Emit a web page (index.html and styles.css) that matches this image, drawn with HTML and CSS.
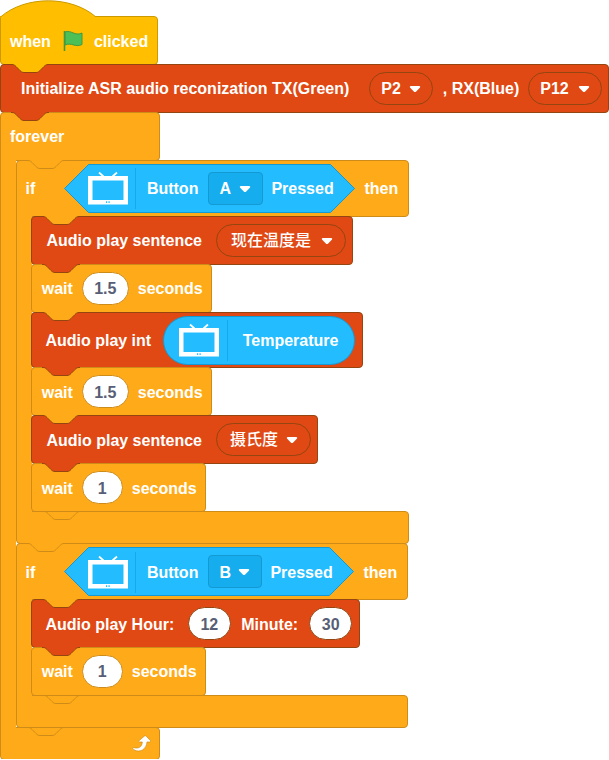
FILE: index.html
```
<!DOCTYPE html>
<html lang="en">
<head>
<meta charset="utf-8">
<title>Block script</title>
<link rel="stylesheet" href="styles.css">
</head>
<body>
<svg class="defs" aria-hidden="true">
  <symbol id="notch" viewBox="0 0 38 10"><path d="M0 0V.5H1C3 .5 4 1.5 5 2.5L9 6.500C10 7.500 11 8.500 13 8.500H25C27 8.500 28 7.500 29 6.500L33 2.500C34 1.500 35 .5 37 .5H38V0" /></symbol>
  <symbol id="tv" viewBox="0 0 42 34"><path d="M12 1.500L16.500 5.500M30 1.500L25.500 5.500" fill="none" stroke="#fff" stroke-width="1.700"/><path fill="#fff" fill-rule="evenodd" d="M1 5H41V33.500H1ZM5.500 9.500V29H36.500V9.500Z"/><path d="M19 31.200h1.200M21.500 31.200h1.200" stroke="#23bcff" stroke-width="1.700"/></symbol>
  <symbol id="arrow" viewBox="0 0 12 8"><path d="M2 1H10Q12 1.200 10.800 2.800L7.200 6.500Q6 7.500 4.800 6.500L1.200 2.800Q0 1.200 2 1Z" fill="#fff"/></symbol>
</svg>
<main class="script">
  <div class="block hat">
    <svg class="dome" viewBox="0 0 98 18"><path d="M.5 17C25.500-4.600 71-4.600 96 17V18H.5Z" fill="#ffbf00"/><path d="M.5 17C25.500-4.600 71-4.600 96 17" fill="none" stroke="#cc9900"/></svg>
    <span>when</span>
    <svg class="flag" viewBox="0 0 20 22"><path d="M2 2C8-.5 12 6.500 19 3V14.500C12 18 9 12 2 15Z" fill="#4cbf56" stroke="#45993d"/><path d="M1.500 1V21" stroke="#45993d" stroke-width="1.600"/></svg>
    <span>clicked</span>
  </div>

  <div class="block red init">
    <svg class="notch from-yellow"><use href="#notch"/></svg>
    <span>Initialize ASR audio reconization TX(Green)</span>
    <div class="menu port"><span>P2</span><svg class="arrow"><use href="#arrow"/></svg></div>
    <span>, RX(Blue)</span>
    <div class="menu port wide"><span>P12</span><svg class="arrow"><use href="#arrow"/></svg></div>
  </div>

  <div class="loop">
    <div class="block head forever">
      <svg class="notch from-red"><use href="#notch"/></svg>
      <span>forever</span>
    </div>
    <div class="body">
      <div class="loop">
        <div class="block tall head branch-a">
          <svg class="notch"><use href="#notch"/></svg>
          <span class="if">if</span>
          <div class="bool">
            <svg class="hex" viewBox="0 0 291 49"><path d="M24.500 .5H266.500L290.500 24.500L266.500 48.500H24.500L.5 24.500Z"/></svg>
            <svg class="tv"><use href="#tv"/></svg><i class="divider"></i>
            <span>Button</span>
            <div class="select"><span>A</span><svg class="arrow"><use href="#arrow"/></svg></div>
            <span>Pressed</span>
          </div>
          <span>then</span>
        </div>
        <div class="body">
          <div class="block red sentence">
            <svg class="notch on-red"><use href="#notch"/></svg>
            <span>Audio play sentence</span>
            <div class="menu phrase"><span>现在温度是</span><svg class="arrow"><use href="#arrow"/></svg></div>
          </div>
          <div class="block wait">
            <svg class="notch from-red"><use href="#notch"/></svg>
            <span>wait</span><div class="input">1.5</div><span>seconds</span>
          </div>
          <div class="block red tall play-int">
            <svg class="notch on-red"><use href="#notch"/></svg>
            <span>Audio play int</span>
            <div class="reporter"><svg class="tv"><use href="#tv"/></svg><i class="divider"></i><span>Temperature</span></div>
          </div>
          <div class="block wait">
            <svg class="notch from-red"><use href="#notch"/></svg>
            <span>wait</span><div class="input">1.5</div><span>seconds</span>
          </div>
          <div class="block red sentence unit">
            <svg class="notch on-red"><use href="#notch"/></svg>
            <span>Audio play sentence</span>
            <div class="menu phrase"><span>摄氏度</span><svg class="arrow"><use href="#arrow"/></svg></div>
          </div>
          <div class="block wait short">
            <svg class="notch from-red"><use href="#notch"/></svg>
            <span>wait</span><div class="input">1</div><span>seconds</span>
          </div>
        </div>
        <div class="block foot branch-a"><svg class="notch inner"><use href="#notch"/></svg></div>
      </div>

      <div class="loop">
        <div class="block tall head branch-b">
          <svg class="notch"><use href="#notch"/></svg>
          <span class="if">if</span>
          <div class="bool">
            <svg class="hex" viewBox="0 0 290 49"><path d="M24.500 .5H265.500L289.500 24.500L265.500 48.500H24.500L.5 24.500Z"/></svg>
            <svg class="tv"><use href="#tv"/></svg><i class="divider"></i>
            <span>Button</span>
            <div class="select"><span>B</span><svg class="arrow"><use href="#arrow"/></svg></div>
            <span>Pressed</span>
          </div>
          <span>then</span>
        </div>
        <div class="body">
          <div class="block red time">
            <svg class="notch on-red"><use href="#notch"/></svg>
            <span>Audio play Hour:</span><div class="input">12</div><span>Minute:</span><div class="input">30</div>
          </div>
          <div class="block wait short">
            <svg class="notch from-red"><use href="#notch"/></svg>
            <span>wait</span><div class="input">1</div><span>seconds</span>
          </div>
        </div>
        <div class="block foot branch-b"><svg class="notch inner"><use href="#notch"/></svg></div>
      </div>
    </div>
    <div class="block foot forever end">
      <svg class="notch inner"><use href="#notch"/></svg>
      <svg class="repeat" viewBox="0 0 20 18"><path d="M1.500 12.500C7 14.200 10 11.500 10.300 7H7.500Q6.300 6.500 7.200 5.500L12.500 1Q13.500 .3 14.300 1.200L18.500 5.700Q19 6.800 17.800 7H15C14.500 14 8.500 18.200 2 14.900Q0 13.500 1.500 12.500Z" fill="#fff" stroke="#cf8b17" stroke-width=".7"/></svg>
    </div>
  </div>
</main>
</body>
</html>
```
FILE: styles.css
```
* { box-sizing: border-box; }
body {
  margin: 0;
  background: #fff;
  color: #fff;
  font: bold 16px/20px "Liberation Sans", "Noto Sans CJK SC", sans-serif;
  overflow: hidden;
}
.defs { position: absolute; width: 0; height: 0; }
.script { padding-top: 16px; width: 609px; }
svg { display: block; flex: none; }
span { white-space: nowrap; padding-top: 1px; }

.block {
  position: relative;
  display: flex;
  align-items: center;
  height: 48.930px;
  margin-bottom: -1px;
  padding: 1px 0 0 9px;
  background: #ffab19;
  border: 1px solid #cf8b17;
  border-radius: 4px;
}
.block > * { flex: none; }
.tall { height: 56.900px; }
.red { background: #e04814; border-color: #944510; }

.hat { width: 158px; height: 49px; background: #ffbf00; border-color: #cc9900; border-top-left-radius: 0; }
.dome { position: absolute; left: -1px; top: -17px; width: 98px; height: 18px; }
.flag { width: 20px; height: 22px; margin: 0 11px 0 12px; }

.notch {
  position: absolute;
  left: 10px;
  top: -1px;
  width: 38px;
  height: 10px;
  fill: #ffab19;
  stroke: #cf8b17;
}
.notch.inner { left: 26px; }
.from-yellow { fill: #ffbf00; stroke: #944510; }
.from-red { fill: #e04814; stroke: #944510; }
.on-red { stroke: #944510; }

.loop { position: relative; }
.body {
  position: relative;
  z-index: 1;
  border-left: 1px solid #cf8b17;
  padding-left: 14.600px;
  background: linear-gradient(#ffab19, #ffab19) 0 0 / 15px 100% no-repeat;
}
.body .body { padding-left: 14.800px; }
.head { border-bottom-left-radius: 0; }
.foot { height: 32.950px; border-top-left-radius: 0; }
.forever { width: 160px; }
.branch-a { width: 393px; }
.branch-b { width: 392px; }

.init { width: 609px; padding-left: 20px; }
.init .menu { margin-left: 20px; margin-right: 9.500px; }
.init .menu.wide { margin-left: 9px; margin-right: 0; }
.sentence { width: 322px; padding-left: 14px; }
.sentence .menu { margin-left: 14px; }
.unit { width: 287px; }
.wait { width: 181px; padding-left: 9.300px; }
.wait.short { width: 175px; }
.play-int { width: 332px; padding-left: 13px; }
.time { width: 329px; padding-left: 13px; }

.menu {
  display: flex;
  align-items: center;
  justify-content: space-between;
  width: 64px;
  height: 33px;
  margin-top: -1px;
  padding: 1px 11.500px 0 11px;
  border: 1px solid #944510;
  border-radius: 17px;
}
.menu.wide { width: 74px; }
.menu.phrase { width: 130px; padding: 0 12px 0 14px; font-weight: 500; }
.unit .menu.phrase { width: 95px; padding: 0 11.500px 0 13px; }
.arrow { width: 12px; height: 8px; }
.menu .arrow { margin-top: 1px; }

.input {
  display: flex;
  align-items: center;
  justify-content: center;
  width: 47px;
  height: 33px;
  margin: -1px 9px 0;
  padding-top: 2px;
  color: #575e75;
  background: #fff;
  border: 1px solid #cf8b17;
  border-radius: 17px;
}
.short .input { width: 41px; }
.time .input { width: 43px; margin: -1px 10.500px 0 13.500px; border-color: #944510; }
.time .input:last-child { margin-left: 11px; margin-right: 0; }

.bool {
  position: relative;
  display: flex;
  align-items: center;
  width: 291px;
  height: 49px;
  margin: -1px 9px 0 29px;
  padding: 1px 0 0 23px;
}
.branch-b .bool { width: 290px; }
.hex { position: absolute; inset: 0; width: 100%; height: 49px; fill: #23bcff; stroke: #1599d3; }
.bool > :not(.hex) { position: relative; }
.tv { width: 42px; height: 34px; margin-top: -1px; }
.divider { width: 1px; height: 41px; margin: 0 10.500px 0 6px; background: #16a8ea; flex: none; }
.select {
  display: flex;
  align-items: center;
  justify-content: space-between;
  width: 55px;
  height: 33px;
  margin: -1px 8.500px 0 9.500px;
  padding: 1px 11px 0 10.500px;
  background: #16adee;
  border: 1px solid #1599d3;
  border-radius: 4px;
}
.branch-b .select { width: 54px; }
.reporter {
  display: flex;
  align-items: center;
  width: 192px;
  height: 49px;
  margin: -1px 0 0 12px;
  padding-left: 14px;
  background: #23bcff;
  border: 1px solid #1599d3;
  border-radius: 25px;
}
.reporter .divider { margin-left: 7px; margin-right: 14.500px; }
.repeat { width: 20px; height: 18px; margin-left: 122px; }
```
